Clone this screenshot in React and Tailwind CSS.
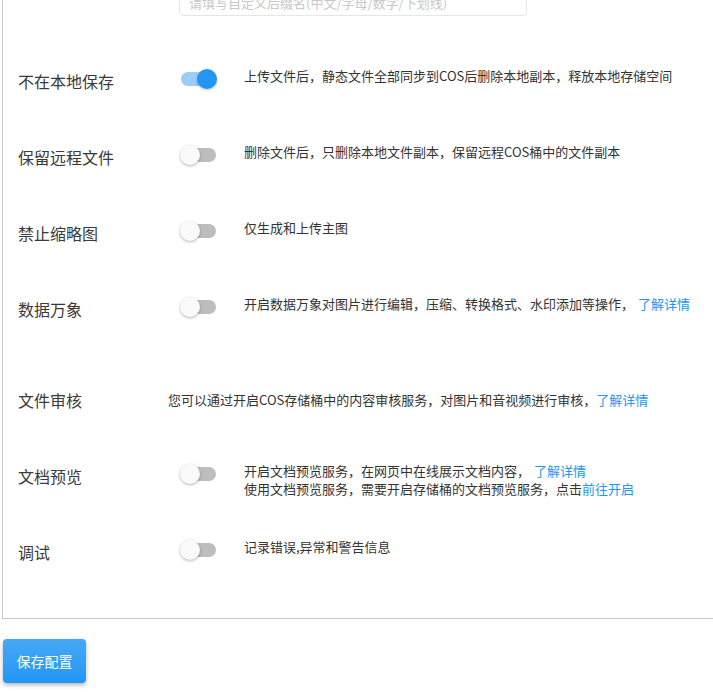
import React from "react";

const Switch = ({ on }) => (
  <div className="relative w-[37px] h-[20px] mt-[12px] shrink-0">
    <div
      className={
        on
          ? "absolute left-[1px] right-[1px] top-[3px] h-[14px] rounded-full bg-[#9bcdf8]"
          : "absolute left-[1px] right-[1px] top-[3px] h-[14px] rounded-full bg-[#bdbdbd]"
      }
    />
    <div
      className={
        on
          ? "absolute right-0 top-0 w-[20px] h-[20px] rounded-full bg-[#2196f3] shadow-[0_1px_3px_rgba(0,0,0,0.25)]"
          : "absolute left-0 top-0 w-[20px] h-[20px] rounded-full bg-[#fafafa] shadow-[0_1px_3px_rgba(0,0,0,0.3)]"
      }
    />
  </div>
);

const Link = ({ children }) => <span className="text-[#2196f3]">{children}</span>;

const Row = ({ label, on, height = "h-[76px]", children }) => (
  <div className={`flex ${height}`}>
    <div className="w-[165px] shrink-0 pl-[15px] pt-[12px] text-[16px] leading-[24px] text-[#3a3a3a]">
      {label}
    </div>
    <div className="w-[76px] shrink-0 pl-[12px]">
      <Switch on={on} />
    </div>
    <div className="mt-[10px] text-[13px] leading-[18px] text-[#333]">{children}</div>
  </div>
);

export default function App() {
  return (
    <div className="w-[713px] h-[692px] overflow-hidden bg-white font-['Noto_Sans_CJK_SC','Noto_Sans',sans-serif]">
      <div className="ml-[2px] w-[740px] -mt-[10px] border-l border-b border-[#c9c9c9] pb-[14px]">
        <div className="ml-[176px] w-[348px] h-[26px] border border-[#e6e6e6] rounded-sm px-[9px] text-[13px] leading-[24px] text-[#c8c8c8]">
          请填写自定义后缀名(中文/字母/数字/下划线)
        </div>
        <div className="mt-[41px]">
          <Row label="不在本地保存" on>
            上传文件后，静态文件全部同步到COS后删除本地副本，释放本地存储空间
          </Row>
          <Row label="保留远程文件">
            删除文件后，只删除本地文件副本，保留远程COS桶中的文件副本
          </Row>
          <Row label="禁止缩略图">仅生成和上传主图</Row>
          <Row label="数据万象" height="h-[91px]">
            开启数据万象对图片进行编辑，压缩、转换格式、水印添加等操作，
            <span className="ml-[4px]">
              <Link>了解详情</Link>
            </span>
          </Row>
          <div className="flex h-[76px]">
            <div className="w-[165px] shrink-0 pl-[15px] pt-[12px] text-[16px] leading-[24px] text-[#3a3a3a]">
              文件审核
            </div>
            <div className="mt-[15px] text-[13px] leading-[18px] text-[#333]">
              您可以通过开启COS存储桶中的内容审核服务，对图片和音视频进行审核，
              <Link>了解详情</Link>
            </div>
          </div>
          <Row label="文档预览">
            开启文档预览服务，在网页中在线展示文档内容，
            <span className="ml-[4px]">
              <Link>了解详情</Link>
            </span>
            <br />
            使用文档预览服务，需要开启存储桶的文档预览服务，点击<Link>前往开启</Link>
          </Row>
          <Row label="调试">记录错误,异常和警告信息</Row>
        </div>
      </div>
      <button className="mt-[20px] ml-[3px] w-[83px] h-[44px] rounded-[4px] bg-gradient-to-b from-[#45a8f6] to-[#2196f3] text-white text-[14px] shadow-[0_2px_4px_rgba(0,0,0,0.3)]">
        保存配置
      </button>
    </div>
  );
}
